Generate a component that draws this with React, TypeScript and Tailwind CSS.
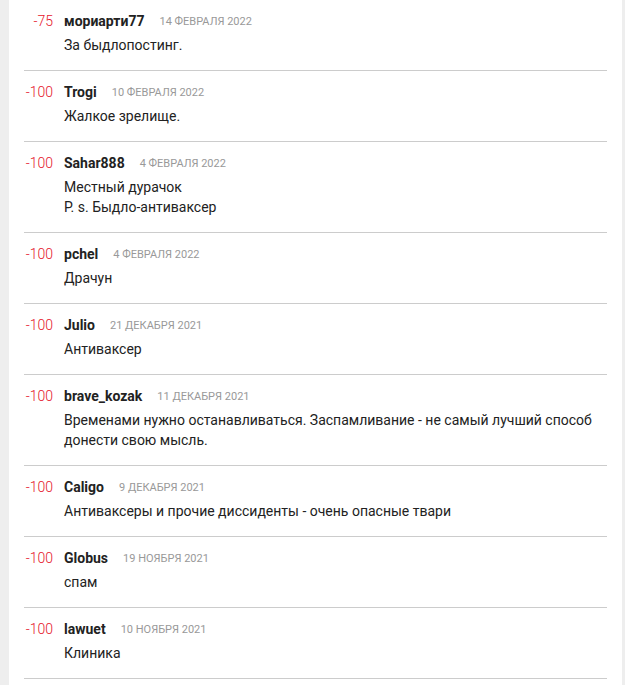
const COMMENTS: { score: number; author: string; date: string; lines: string[] }[] = [
  { score: -75, author: "мориарти77", date: "14 февраля 2022", lines: ["За быдлопостинг."] },
  { score: -100, author: "Trogi", date: "10 февраля 2022", lines: ["Жалкое зрелище."] },
  { score: -100, author: "Sahar888", date: "4 февраля 2022", lines: ["Местный дурачок", "P. s. Быдло-антиваксер"] },
  { score: -100, author: "pchel", date: "4 февраля 2022", lines: ["Драчун"] },
  { score: -100, author: "Julio", date: "21 декабря 2021", lines: ["Антиваксер"] },
  {
    score: -100,
    author: "brave_kozak",
    date: "11 декабря 2021",
    lines: ["Временами нужно останавливаться. Заспамливание - не самый лучший способ донести свою мысль."],
  },
  { score: -100, author: "Caligo", date: "9 декабря 2021", lines: ["Антиваксеры и прочие диссиденты - очень опасные твари"] },
  { score: -100, author: "Globus", date: "19 ноября 2021", lines: ["спам"] },
  { score: -100, author: "lawuet", date: "10 ноября 2021", lines: ["Клиника"] },
];

export default function App() {
  return (
    <div className="flex min-h-[685px] bg-[#eeeeee] px-[9px] pr-[3px] font-['Roboto',sans-serif]">
      <div className="flex-1 bg-white px-[15px]">
        {COMMENTS.map((c, i) => (
          <div key={i} className="flex border-b border-[#cccccc] pt-[11px] pb-[15px]">
            <div className="w-[29px] shrink-0 text-right text-[14px] leading-5 font-light text-[#e5142a]">
              {c.score}
            </div>
            <div className="ml-[11px] flex flex-col gap-[4px]">
              <div className="flex h-5 items-center gap-[15px]">
                <span className="text-[14px] leading-5 font-bold text-[#222222]">{c.author}</span>
                <span className="pt-[2px] text-[11px] leading-5 uppercase text-[#999999]">{c.date}</span>
              </div>
              <div className="text-[14px] leading-5 text-[#222222]">
                {c.lines.map((l, j) => (
                  <p key={j}>{l}</p>
                ))}
              </div>
            </div>
          </div>
        ))}
      </div>
    </div>
  );
}
